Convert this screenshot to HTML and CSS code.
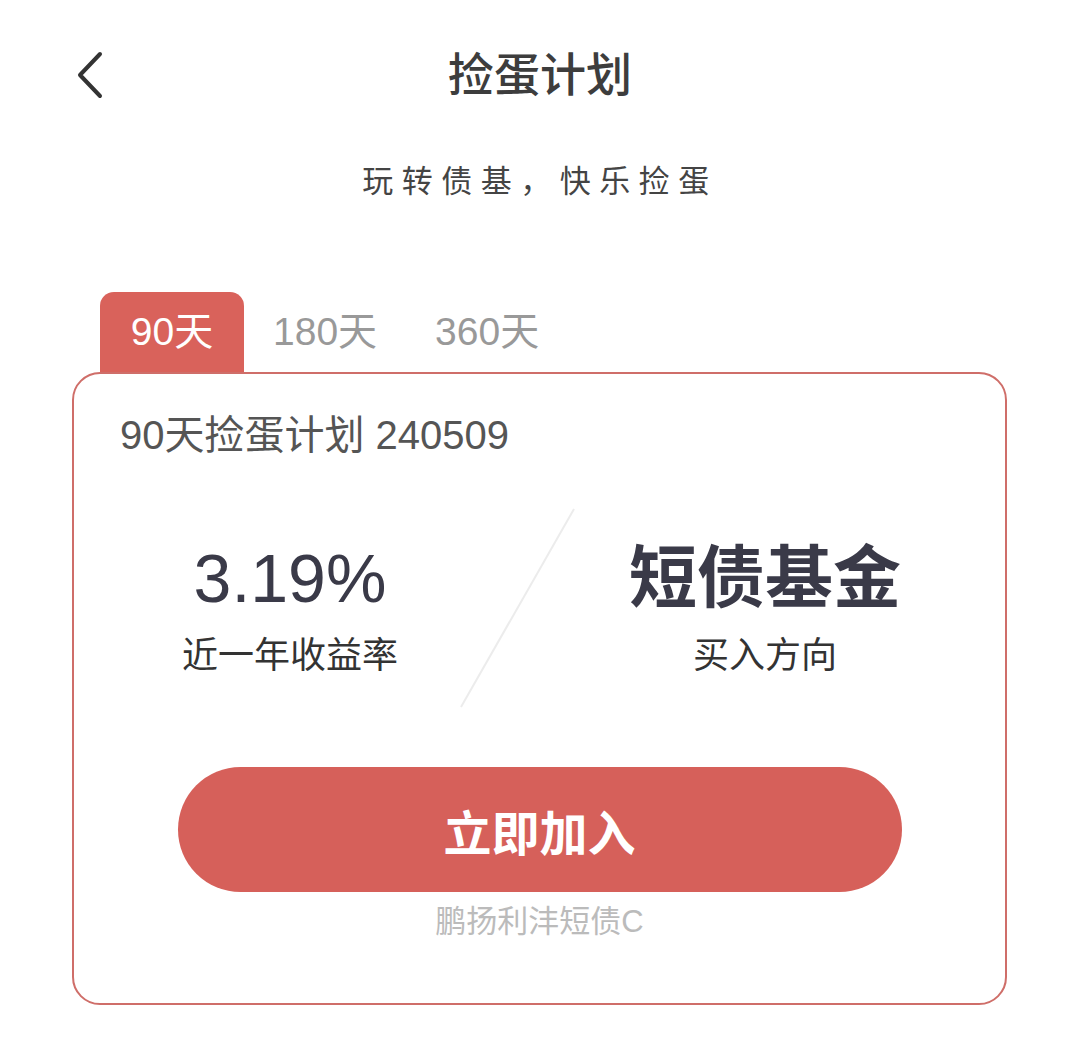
FILE: index.html
```html
<!DOCTYPE html>
<html lang="zh">
<head>
<meta charset="utf-8">
<link rel="stylesheet" href="styles.css">
</head>
<body>
<div class="page">
  <div class="header">
    <div class="back">
      <svg width="30" height="48" viewBox="0 0 30 48"><polyline points="24,3 4,24 24,45" fill="none" stroke="#333" stroke-width="4" stroke-linecap="round" stroke-linejoin="round"/></svg>
    </div>
    <div class="title">捡蛋计划</div>
    <div></div>
  </div>
  <div class="subtitle">玩转债基，快乐捡蛋</div>
  <div class="tabs">
    <div class="tab active">90天</div>
    <div class="tab">180天</div>
    <div class="tab">360天</div>
  </div>
  <div class="card">
    <div class="card-title">90天捡蛋计划 240509</div>
    <div class="stats">
      <div class="stat">
        <div class="stat-value num">3.19%</div>
        <div class="stat-label">近一年收益率</div>
      </div>
      <svg class="divider" width="115" height="200" viewBox="0 0 115 200"><line x1="114" y1="1" x2="1" y2="199" stroke="#ececec" stroke-width="2"/></svg>
      <div class="stat">
        <div class="stat-value cn">短债基金</div>
        <div class="stat-label">买入方向</div>
      </div>
    </div>
    <div class="btn">立即加入</div>
    <div class="fund">鹏扬利沣短债C</div>
  </div>
</div>
</body>
</html>
```

FILE: styles.css
```css
* { box-sizing: border-box; }
body {
  margin: 0;
  background: #fff;
  font-family: "Liberation Sans", "Noto Sans CJK SC", sans-serif;
  color: #333;
}
.page { width: 1080px; }
.header {
  display: grid;
  grid-template-columns: 1fr auto 1fr;
  height: 150px;
  align-items: center;
}
.back { padding-left: 76px; display: flex; align-items: center; }
.back svg { display: block; }
.title {
  font-size: 46px;
  font-weight: 500;
  color: #3d3d3d;
  line-height: 150px;
}
.subtitle {
  text-align: center;
  font-size: 31px;
  letter-spacing: 8.5px;
  line-height: 64px;
  color: #444;
}
.tabs {
  display: flex;
  margin-top: 78px;
  padding-left: 100px;
  height: 80px;
}
.tab {
  padding: 0 29px;
  font-size: 39px;
  line-height: 80px;
  color: #999;
}
.tab.active {
  background: #d9625b;
  color: #fff;
  border-radius: 14px 14px 0 0;
  width: 144px;
  padding: 0;
  text-align: center;
}
.card {
  margin-left: 72px;
  width: 935px;
  height: 633px;
  border: 2px solid #cf6e69;
  border-radius: 28px;
  padding-top: 36px;
  display: flex;
  flex-direction: column;
}
.card-title {
  padding-left: 46px;
  font-size: 40px;
  line-height: 50px;
  color: #555;
}
.stats {
  margin-top: 48px;
  margin-left: 46px;
  display: grid;
  grid-template-columns: 340px 115px 380px;
  height: 200px;
}
.stat {
  display: flex;
  flex-direction: column;
  align-items: center;
  padding-top: 30px;
}
.stat-value {
  font-size: 68px;
  line-height: 80px;
  color: #3a3a48;
}
.stat-value.cn { font-weight: 700; }
.stat-label {
  margin-top: 16px;
  font-size: 36px;
  line-height: 44px;
  color: #333;
}
.divider { display: block; }
.btn {
  margin: 59px auto 0;
  width: 724px;
  height: 125px;
  border-radius: 63px;
  background: #d6605a;
  color: #fff;
  font-size: 48px;
  font-weight: 700;
  display: flex;
  align-items: center;
  justify-content: center;
}
.fund {
  margin-top: 10px;
  text-align: center;
  font-size: 31px;
  line-height: 40px;
  color: #bbb;
}
```
